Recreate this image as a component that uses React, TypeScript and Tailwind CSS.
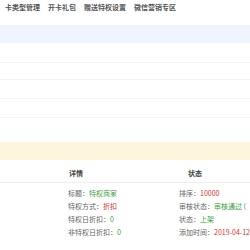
import React from "react";

const font = { fontFamily: '"Noto Sans CJK SC", "Noto Sans", sans-serif' };

export default function App() {
  return (
    <div className="w-[250px] h-[250px] bg-white overflow-hidden" style={font}>
      <div className="h-[15px] flex items-center pl-[5px] gap-[8px] text-[7px] leading-none font-bold text-[#555]">
        <span>卡类型管理</span>
        <span>开卡礼包</span>
        <span>赠送特权设置</span>
        <span>微信营销专区</span>
      </div>
      <div className="h-[10px]" />
      <div className="h-[18px] bg-[#eef5fd]" />
      <div className="flex flex-col">
        <div className="h-[20px] border-b border-[#f4f4f4]" />
        <div className="h-[17px] border-b border-[#f4f4f4]" />
        <div className="h-[19px] border-b border-[#f4f4f4]" />
        <div className="h-[19px] border-b border-[#f4f4f4]" />
        <div className="h-[24px]" />
      </div>
      <div className="h-[18px] bg-[#fdf5dc]" />
      <div className="h-[23px] flex items-end pb-[5px] border-b border-[#eeeeee] text-[7px] leading-none font-bold text-[#444]">
        <span className="w-[188px] pl-[69px]">详情</span>
        <span>状态</span>
      </div>
      <div className="flex text-[7px] leading-none pt-[7px]">
        <div className="w-[188px] pl-[68px] flex flex-col gap-[6px] text-[#666]">
          <div>标题：<span className="text-[#3aa142]">特权商家</span></div>
          <div>特权方式：<span className="text-[#e0302b]">折扣</span></div>
          <div>特权日折扣：<span className="text-[#3aa142]">0</span></div>
          <div>非特权日折扣：<span className="text-[#3aa142]">0</span></div>
        </div>
        <div className="flex flex-col gap-[6px] text-[#666] whitespace-nowrap">
          <div>排序：<span className="text-[#e0302b]">10000</span></div>
          <div>审核状态：<span className="text-[#3aa142]">审核通过</span> (</div>
          <div>状态：<span className="text-[#3aa142]">上架</span></div>
          <div>添加时间：<span className="text-[#e0302b]">2019-04-12</span></div>
        </div>
      </div>
    </div>
  );
}
